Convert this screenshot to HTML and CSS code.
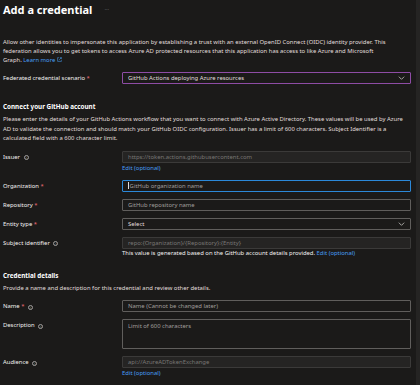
FILE: index.html
```html
<!DOCTYPE html>
<html>
<head>
    <meta charset="utf-8">
    <title>Add a credential</title>
    <link rel="stylesheet" href="styles.css">
</head>
<body>
    <div class="page">
        <div class="blade">
            <div class="blade-header">
                <h1 class="blade-title">Add a credential</h1>
                <span class="more">&middot;&middot;&middot;</span>
            </div>

            <p class="intro">Allow other identities to impersonate this application by establishing a trust with an external OpenID Connect (OIDC) identity provider. This federation allows you to get tokens to access Azure AD protected resources that this application has access to like Azure and Microsoft Graph. <a class="link" href="#">Learn more</a> <svg class="ext" viewBox="0 0 8 8" width="5" height="5"><path d="M3 1H1v6h6V5M4.5 1H7v2.5M7 1L3.5 4.5" fill="none" stroke="#479ef5" stroke-width="0.9"/></svg></p>

            <div class="field">
                <label class="label">Federated credential scenario <span class="req">*</span></label>
                <div class="control">
                    <div class="input select scenario">GitHub Actions deploying Azure resources
                        <svg class="chevron" viewBox="0 0 10 6" width="7" height="4"><path d="M1 1l4 4 4-4" fill="none" stroke="#c8c6c4" stroke-width="1.2"/></svg>
                    </div>
                </div>
            </div>

            <h2 class="section-title">Connect your GitHub account</h2>
            <p class="section-text">Please enter the details of your GitHub Actions workflow that you want to connect with Azure Active Directory. These values will be used by Azure AD to validate the connection and should match your GitHub OIDC configuration. Issuer has a limit of 600 characters. Subject Identifier is a calculated field with a 600 character limit.</p>

            <div class="field">
                <label class="label">Issuer <span class="info">i</span></label>
                <div class="control">
                    <div class="input disabled">https://token.actions.githubusercontent.com</div>
                    <a class="link edit" href="#">Edit (optional)</a>
                </div>
            </div>

            <div class="field">
                <label class="label">Organization <span class="req">*</span></label>
                <div class="control">
                    <div class="input focused"><span class="caret"></span><span class="placeholder">GitHub organization name</span></div>
                </div>
            </div>

            <div class="field">
                <label class="label">Repository <span class="req">*</span></label>
                <div class="control">
                    <div class="input"><span class="placeholder">GitHub repository name</span></div>
                </div>
            </div>

            <div class="field">
                <label class="label">Entity type <span class="req">*</span></label>
                <div class="control">
                    <div class="input select">Select
                        <svg class="chevron" viewBox="0 0 10 6" width="7" height="4"><path d="M1 1l4 4 4-4" fill="none" stroke="#c8c6c4" stroke-width="1.2"/></svg>
                    </div>
                </div>
            </div>

            <div class="field">
                <label class="label">Subject identifier <span class="info">i</span></label>
                <div class="control">
                    <div class="input disabled">repo:{Organization}/{Repository}:{Entity}</div>
                    <div class="hint">This value is generated based on the GitHub account details provided. <a class="link" href="#">Edit (optional)</a></div>
                </div>
            </div>

            <h2 class="section-title details">Credential details</h2>
            <p class="section-text">Provide a name and description for this credential and review other details.</p>

            <div class="field">
                <label class="label">Name <span class="req">*</span> <span class="info">i</span></label>
                <div class="control">
                    <div class="input"><span class="placeholder">Name (Cannot be changed later)</span></div>
                </div>
            </div>

            <div class="field">
                <label class="label">Description <span class="info">i</span></label>
                <div class="control">
                    <div class="input textarea"><span class="placeholder">Limit of 600 characters</span></div>
                </div>
            </div>

            <div class="field">
                <label class="label">Audience <span class="info">i</span></label>
                <div class="control">
                    <div class="input disabled">api://AzureADTokenExchange</div>
                    <a class="link edit" href="#">Edit (optional)</a>
                </div>
            </div>
        </div>
        <div class="scrollbar"></div>
    </div>
</body>
</html>
```

FILE: styles.css
```css
* {
    font-family: 'Noto Sans', sans-serif;
    box-sizing: border-box;
}

body {
    margin: 0;
    padding: 0;
    background-color: #1b1a19;
    color: #e1dfdd;
}

.page {
    display: flex;
    height: 385px;
    overflow: hidden;
}

.blade {
    flex-grow: 1;
    padding-left: 3px;
    padding-right: 5px;
}

.scrollbar {
    width: 4px;
    background-color: #252423;
}

.blade-header {
    display: flex;
    align-items: center;
    height: 18px;
}

.blade-title {
    margin: 0;
    font-size: 11px;
    font-weight: 700;
    color: #ffffff;
}

.more {
    margin-left: 12px;
    font-size: 6px;
    color: #8a8886;
}

.intro {
    max-width: 390px;
    margin: 20px 0 0 0;
    font-size: 5.9px;
    line-height: 9px;
    color: #e1dfdd;
}

.link {
    color: #479ef5;
    text-decoration: none;
}

.ext {
    vertical-align: 0px;
}

.field {
    display: flex;
    align-items: flex-start;
    margin-top: 7px;
}

.label {
    width: 119px;
    flex-shrink: 0;
    font-size: 5.9px;
    line-height: 12px;
    color: #f3f2f1;
}

.req {
    color: #f1707b;
}

.info {
    display: inline-block;
    width: 5px;
    height: 5px;
    margin-left: 2px;
    border: 0.6px solid #a19f9d;
    border-radius: 50%;
    font-size: 3.5px;
    line-height: 4px;
    text-align: center;
    color: #a19f9d;
    vertical-align: -0.5px;
}

.control {
    flex-grow: 1;
}

.input {
    position: relative;
    height: 12px;
    padding-left: 5px;
    border: 1px solid #605e5c;
    border-radius: 1px;
    background-color: #1b1a19;
    font-size: 5.9px;
    line-height: 10px;
    color: #e1dfdd;
}

.placeholder {
    color: #a19f9d;
}

.scenario {
    border-color: #8e4ca5;
}

.focused {
    border-color: #2b88d8;
}

.caret {
    display: inline-block;
    width: 0.6px;
    height: 7px;
    margin-right: 1px;
    background-color: #e1dfdd;
    vertical-align: -1px;
}

.disabled {
    background-color: #252423;
    border-color: #3b3a39;
    color: #797775;
}

.textarea {
    height: 30px;
    padding-top: 1px;
}

.chevron {
    position: absolute;
    right: 5px;
    top: 3px;
}

.edit {
    display: block;
    font-size: 5.9px;
    line-height: 10px;
}

.hint {
    font-size: 5.9px;
    line-height: 9px;
    color: #f3f2f1;
}

.section-title {
    margin: 18px 0 0 0;
    font-size: 6.3px;
    font-weight: 700;
    color: #ffffff;
}

.section-text {
    max-width: 405px;
    margin: 4px 0 0 0;
    font-size: 5.9px;
    line-height: 9.6px;
    color: #e1dfdd;
}

.details {
    margin-top: 13px;
}
```
